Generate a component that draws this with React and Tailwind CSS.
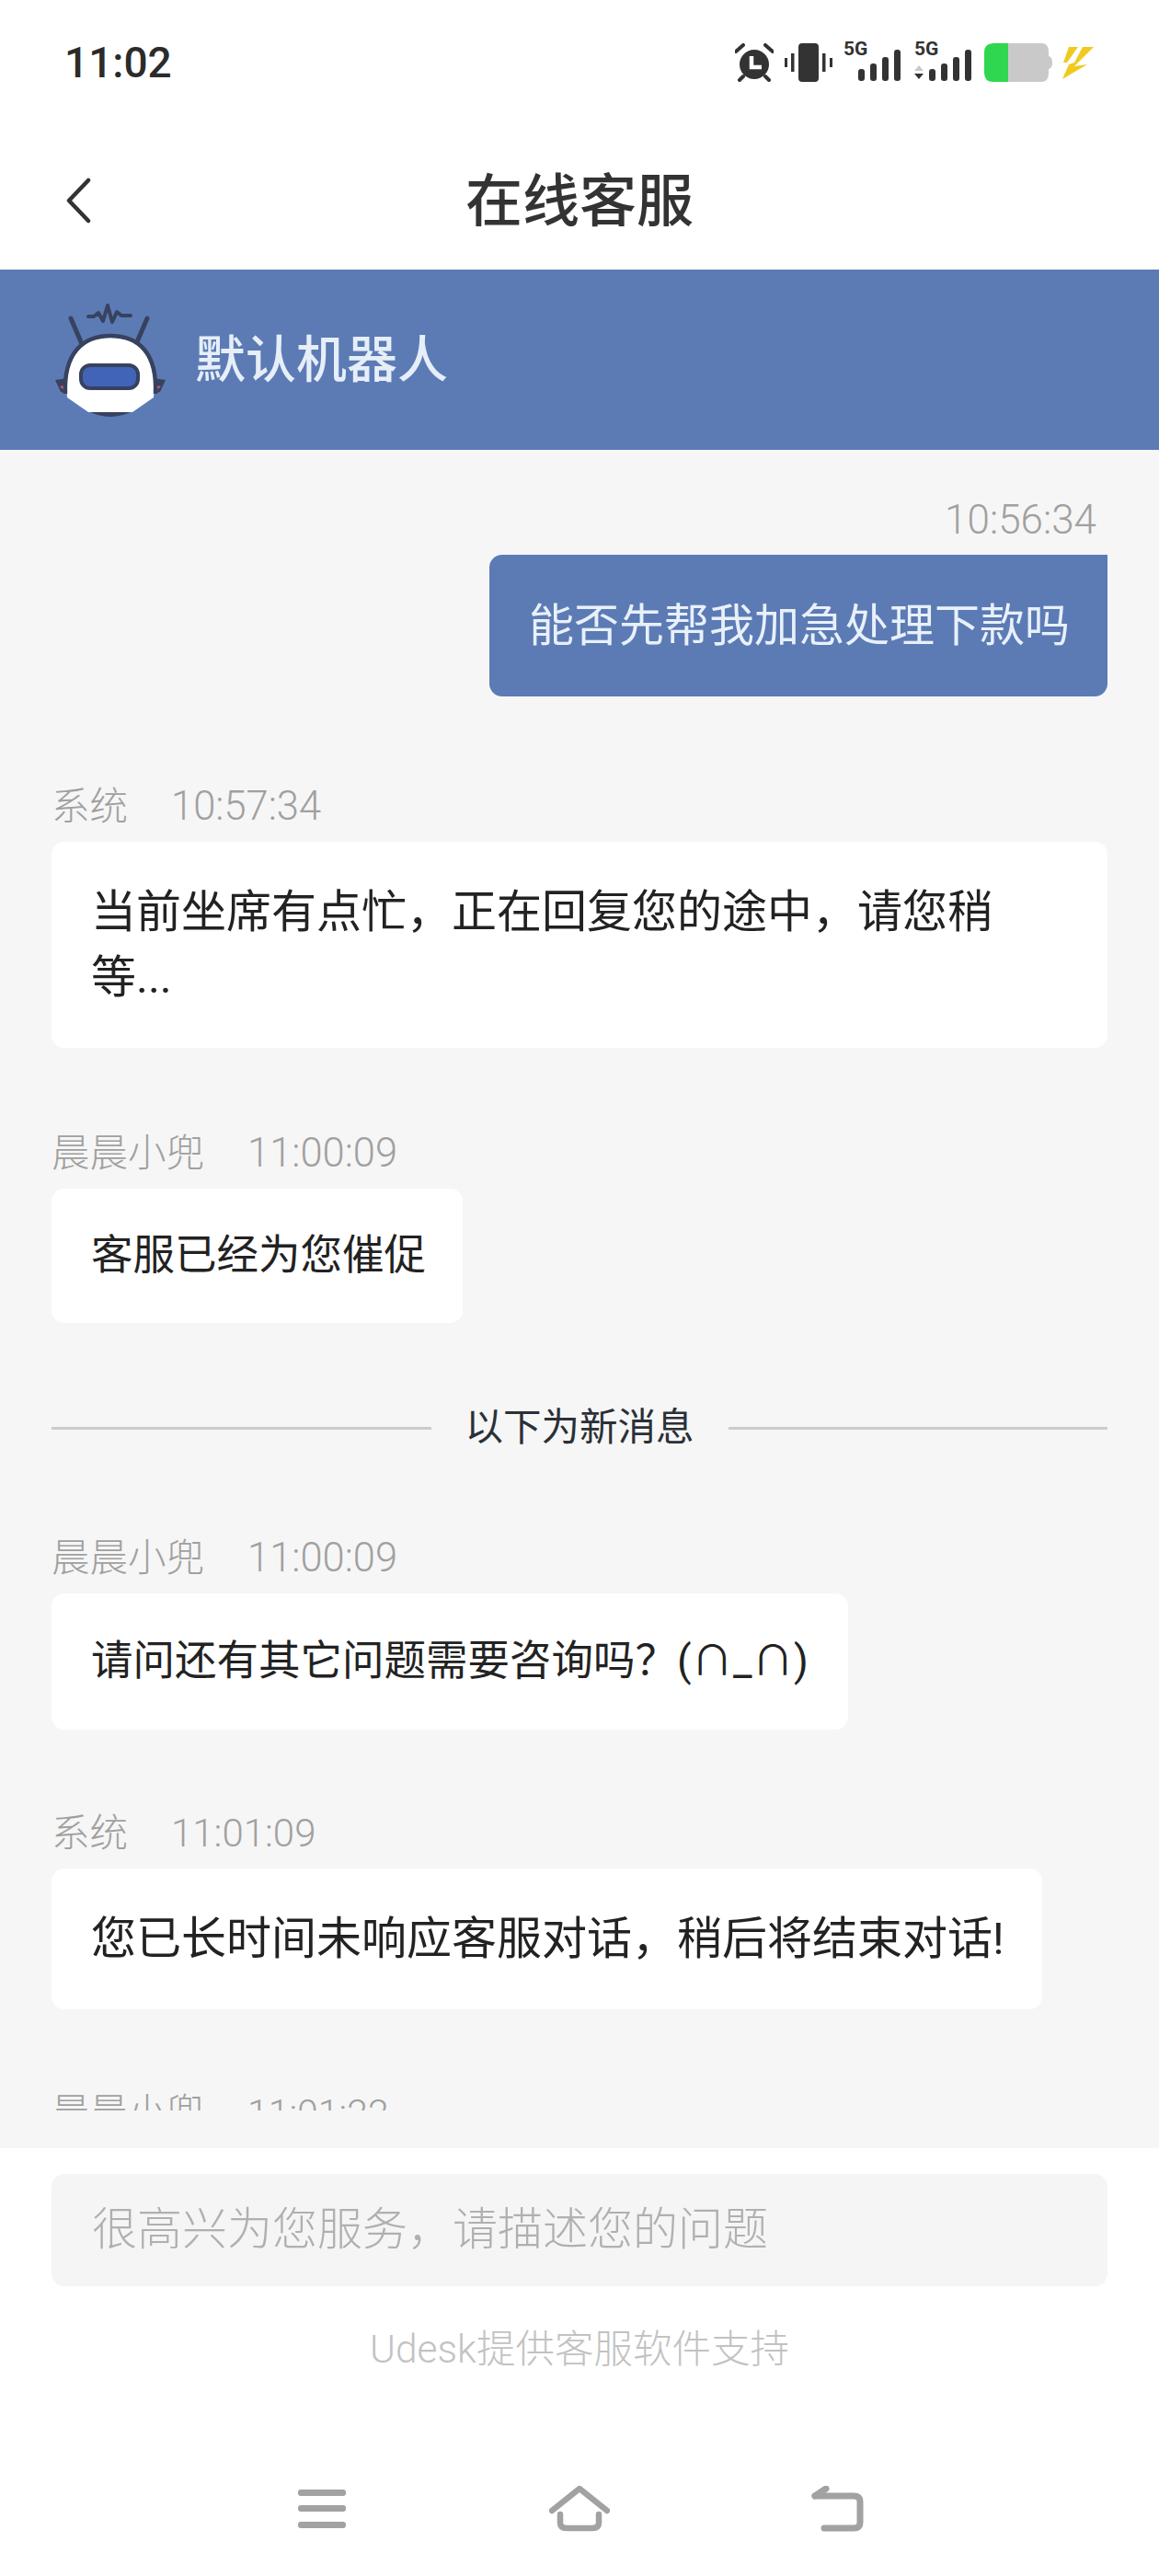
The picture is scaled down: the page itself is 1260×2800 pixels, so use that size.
import React from 'react';

const cjk = "font-['Roboto','Noto_Sans_CJK_SC',sans-serif]";

const Signal = ({ arrows }) => (
  <div className="flex flex-col w-[64px] h-[44px] relative">
    <span className="absolute left-0 top-[-5px] text-[21px] leading-[24px] font-bold text-[#333] font-['Roboto',sans-serif]">5G</span>
    <svg width="64" height="44" viewBox="0 0 64 44" className="block">
      {arrows && (
        <>
          <path d="M0 31 L5 25 L10 31 Z" fill="#c9c9c9" />
          <path d="M0 34 L10 34 L5 40 Z" fill="#333" />
        </>
      )}
      <rect x="16" y="29" width="7" height="13" rx="3" fill="#333" />
      <rect x="29" y="23" width="7" height="19" rx="3" fill="#333" />
      <rect x="42" y="16" width="7" height="26" rx="3" fill="#333" />
      <rect x="55" y="8" width="7" height="34" rx="3" fill="#333" />
    </svg>
  </div>
);

const StatusBar = () => (
  <div className="h-[136px] flex items-center justify-between pl-[70px] pr-[70px]">
    <span className="text-[46px] leading-none font-medium text-[#2b2b2b] font-['Roboto',sans-serif]">11:02</span>
    <div className="flex items-center">
      {/* alarm */}
      <svg width="42" height="42" viewBox="0 0 42 42" className="block">
        <circle cx="21" cy="23" r="16" fill="#333" />
        <path d="M1 9 L9 2 M41 9 L33 2" stroke="#333" strokeWidth="4" strokeLinecap="round" />
        <path d="M5 40 L9 36 M37 40 L33 36" stroke="#333" strokeWidth="4" strokeLinecap="round" />
        <path d="M18 14 V26 H29" fill="none" stroke="#fff" strokeWidth="4.5" />
      </svg>
      {/* vibrate */}
      <svg width="52" height="42" viewBox="0 0 52 42" className="block ml-[12px]">
        <rect x="15" y="0" width="22" height="42" rx="4" fill="#333" />
        <rect x="7" y="11" width="3.5" height="20" fill="#333" />
        <rect x="0" y="16" width="3" height="10" fill="#333" />
        <rect x="41" y="11" width="3.5" height="20" fill="#333" />
        <rect x="49" y="16" width="3" height="10" fill="#333" />
      </svg>
      <div className="ml-[12px]"><Signal /></div>
      <div className="ml-[13px]"><Signal arrows /></div>
      {/* battery */}
      <svg width="76" height="42" viewBox="0 0 76 42" className="block ml-[12px]">
        <path d="M26 0 H62 Q70 0 70 9 V33 Q70 42 62 42 H26 Z" fill="#c9c9c9" />
        <path d="M70 14 Q74 15 74 21 Q74 27 70 28 Z" fill="#c9c9c9" />
        <path d="M26 0 H10 Q0 0 0 10 V32 Q0 42 10 42 H26 Z" fill="#2fd64f" />
      </svg>
      {/* charging bolt */}
      <svg width="36" height="36" viewBox="0 0 36 36" className="block ml-[8px]">
        <path d="M8 1 H18 L6 18 H2 Z" fill="#f0ca1f" />
        <path d="M23 1 H35 L14 22 L28 20 L1 36 L8 20 L14 18 Z" fill="#f0ca1f" />
      </svg>
    </div>
  </div>
);

const Robot = () => (
  <svg width="160" height="150" viewBox="0 0 160 150" className="block shrink-0 mt-[8px]">
    <path d="M20 93 L34 91 L34 108 L26 106 Z" fill="#37425f" />
    <path d="M140 93 L126 91 L126 108 L134 106 Z" fill="#37425f" />
    <path d="M25 100 L34 98 L34 108 Z" fill="#d9566a" />
    <path d="M135 100 L126 98 L126 108 Z" fill="#d9566a" />
    <path d="M37 26 L49 54 M120 26 L108 54" stroke="#37425f" strokeWidth="5" strokeLinecap="round" />
    <path d="M56 24 H62 L67 20 L72 29 L77 12 L82 30 L87 19 L92 23 H102" fill="none" stroke="#37425f" strokeWidth="4" strokeLinecap="round" strokeLinejoin="round" />
    <path d="M54 126 Q80 140 106 126 Z" fill="#37425f" />
    <path d="M33 112 C29 66 50 47 80 47 C111 47 131 66 127 112 L104 128 H56 Z" fill="#fff" />
    <path d="M31 108 C29 64 50 45 80 45 C111 45 131 64 129 108" fill="none" stroke="#37425f" strokeWidth="4.5" />
    <rect x="48" y="77" width="62" height="25" rx="10" fill="#4264b8" stroke="#37425f" strokeWidth="4" />
  </svg>
);

const Bubble = ({ children, className }) => (
  <div className={`bg-white rounded-[14px] px-[43px] text-[#222] ${className}`}>{children}</div>
);

const Meta = ({ name, time, timeSize = 'text-[43.5px]' }) => (
  <div className="h-[60px] mb-[9px] pt-[2px] flex items-center leading-none font-light text-[#a0a0a0]">
    <span className="text-[41.5px]">{name}</span>
    <span className={`ml-[47px] ${timeSize}`}>{time}</span>
  </div>
);

const NavIcons = () => (
  <div className="flex items-start h-[60px] pl-[324px]">
    <svg width="52" height="42" viewBox="0 0 52 42" className="block mt-[4px]">
      <rect width="52" height="7" rx="3" fill="#a2a2a2" />
      <rect y="17" width="52" height="7" rx="3" fill="#a2a2a2" />
      <rect y="35" width="52" height="7" rx="3" fill="#a2a2a2" />
    </svg>
    <svg width="66" height="50" viewBox="0 0 66 50" fill="none" stroke="#a2a2a2" strokeWidth="6.5" strokeLinecap="round" strokeLinejoin="round" className="block ml-[221px]">
      <path d="M3 27 L33 3 L63 27" />
      <path d="M12 31 V40 Q12 46 19 46 H47 Q54 46 54 40 V31" />
    </svg>
    <svg width="57" height="50" viewBox="0 0 57 50" fill="none" stroke="#a2a2a2" strokeWidth="7" strokeLinecap="round" strokeLinejoin="round" className="block ml-[219px]">
      <path d="M4 11 H46 Q53 11 53 17 V40 Q53 46 46 46 H14" />
      <path d="M4 11 L16 3" />
    </svg>
  </div>
);

export default function App() {
  return (
    <div className={`w-[1260px] h-[2800px] flex flex-col bg-white ${cjk}`}>
      <StatusBar />

      <div className="h-[157px] pt-[7px] grid grid-cols-[1fr_auto_1fr] items-center">
        <svg width="30" height="50" viewBox="0 0 30 50" fill="none" stroke="#333" strokeWidth="4.5" strokeLinecap="round" strokeLinejoin="round" className="block ml-[71px]">
          <path d="M25 3 L4 25 L25 47" />
        </svg>
        <h1 className="text-[62px] leading-none font-medium text-[#333] pt-[3px]">在线客服</h1>
        <div />
      </div>

      <div className="h-[196px] bg-[#5c7bb5] flex items-center pl-[40px]">
        <Robot />
        <span className="ml-[12px] text-[55px] leading-none text-[#e6eef8] font-medium">默认机器人</span>
      </div>

      <div className="flex-1 min-h-0 bg-[#f6f6f6] pb-[41px]">
        <div className="h-full overflow-hidden px-[56px] pt-[46px]">
          <div className="h-[60px] mb-[8px] flex items-center justify-end pr-[12px] text-[44px] leading-none font-light text-[#a0a0a0]">10:56:34</div>
          <div className="flex justify-end">
            <div className="bg-[#5c7bb5] rounded-[14px] rounded-tr-none w-[672px] h-[154px] flex items-center pl-[43px] text-[49px] leading-none text-[#e8f0fa] whitespace-nowrap">能否先帮我加急处理下款吗</div>
          </div>

          <div className="mt-[89px]">
            <Meta name="系统" time="10:57:34" />
            <Bubble className="py-[41px] text-[49px] leading-[71px]">当前坐席有点忙，正在回复您的途中，请您稍<br />等...</Bubble>
          </div>

          <div className="mt-[84px]">
            <Meta name="晨晨小兜" time="11:00:09" />
            <Bubble className="w-[447px] h-[146px] flex items-center text-[45.5px] leading-none whitespace-nowrap">客服已经为您催促</Bubble>
          </div>

          <div className="mt-[84px] h-[60px] flex items-center">
            <div className="flex-1 h-[3px] bg-[#cccccc]" />
            <span className="mx-[37px] text-[41.5px] leading-none text-[#2b3038]">以下为新消息</span>
            <div className="flex-1 h-[3px] bg-[#cccccc]" />
          </div>

          <div className="mt-[81px]">
            <Meta name="晨晨小兜" time="11:00:09" />
            <Bubble className="w-[866px] h-[148px] flex items-center text-[45.5px] leading-none whitespace-nowrap">请问还有其它问题需要咨询吗？(∩_∩)</Bubble>
          </div>

          <div className="mt-[82px]">
            <Meta name="系统" time="11:01:09" timeSize="text-[42px]" />
            <Bubble className="w-[1077px] h-[153px] flex items-center text-[49px] leading-none whitespace-nowrap">您已长时间未响应客服对话，稍后将结束对话!</Bubble>
          </div>

          <div className="mt-[82px]">
            <Meta name="晨晨小兜" time="11:01:22" timeSize="text-[41px]" />
          </div>
        </div>
      </div>

      <div className="h-[465px] bg-white px-[56px] pt-[28px]">
        <div className="h-[122px] bg-[#f5f5f5] rounded-[14px] flex items-center pl-[44px] pb-[2px] text-[49px] leading-none text-[#b0b0b0] font-light">很高兴为您服务，请描述您的问题</div>
        <div className="mt-[39px] h-[60px] flex items-center justify-center text-[42.5px] leading-none font-light text-[#c2c2c2]">Udesk提供客服软件支持</div>
        <div className="-mx-[56px] mt-[118px]">
          <NavIcons />
        </div>
      </div>
    </div>
  );
}
